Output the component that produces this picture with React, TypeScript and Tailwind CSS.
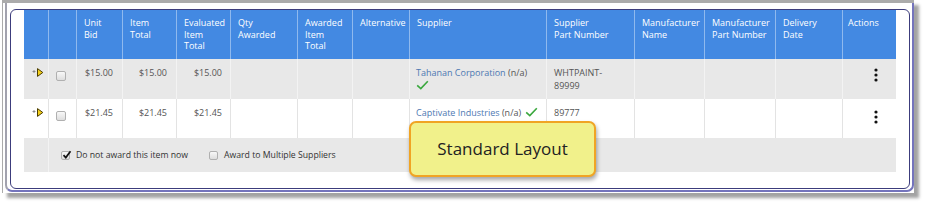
import React from 'react'

const grid =
  'grid grid-cols-[25px_28px_46px_54px_54px_67px_55px_57px_137px_88px_70px_71px_67px_54px]'

const headers = [
  '',
  '',
  'Unit\nBid',
  'Item\nTotal',
  'Evaluated\nItem\nTotal',
  'Qty\nAwarded',
  'Awarded\nItem\nTotal',
  'Alternative',
  'Supplier',
  'Supplier\nPart Number',
  'Manufacturer\nName',
  'Manufacturer\nPart Number',
  'Delivery\nDate',
  'Actions',
]

function Checkbox({ checked = false, size = 'w-[10px] h-[10px]' }: { checked?: boolean; size?: string }) {
  return (
    <div className={`relative ${size} rounded-[2px] border border-[#b0b0b0] bg-linear-to-b from-[#f8f8f8] to-[#dedede]`}>
      {checked && (
        <svg className="absolute -top-[2px] left-[0px]" width="10" height="10" viewBox="0 0 10 10">
          <path d="M1.5 5.2 L3.8 7.6 L8.5 1.2" fill="none" stroke="#111" strokeWidth="1.7" />
        </svg>
      )}
    </div>
  )
}

function Expand() {
  return (
    <svg width="12" height="9" viewBox="0 0 12 9">
      <path d="M0.5 3.5 H3.5 M2 2 V5" stroke="#888" strokeWidth="0.9" />
      <polygon points="5.5,0.6 10.8,4.5 5.5,8.4" fill="#f4cf1a" stroke="#4a3c00" strokeWidth="1" />
    </svg>
  )
}

function Check() {
  return (
    <svg width="13" height="10" viewBox="0 0 13 10">
      <path d="M1.2 5.4 L4.8 8.6 L11.8 1.2" fill="none" stroke="#3aa83e" strokeWidth="1.6" />
    </svg>
  )
}

function Dots() {
  return (
    <svg width="4" height="14" viewBox="0 0 4 14">
      <circle cx="2" cy="2" r="1.6" fill="#111" />
      <circle cx="2" cy="7" r="1.6" fill="#111" />
      <circle cx="2" cy="12" r="1.6" fill="#111" />
    </svg>
  )
}

type Row = {
  unit: string
  supplier: string
  part: string[]
  wrapCheck: boolean
  shade: boolean
}

const rows: Row[] = [
  { unit: '$15.00', supplier: 'Tahanan Corporation', part: ['WHTPAINT-', '89999'], wrapCheck: true, shade: true },
  { unit: '$21.45', supplier: 'Captivate Industries', part: ['89777'], wrapCheck: false, shade: false },
]

export default function App() {
  return (
    <div className="relative w-[928px] h-[205px] bg-white overflow-hidden font-['Open_Sans','Noto_Sans',sans-serif] text-[9px]">
      {/* screenshot frame */}
      <div className="ml-[2px] w-[912px] h-[193px] border-t-[3px] border-l border-[#ababab] shadow-[5px_5px_3px_#a3a3a3] pl-[2px]">
        <div className="w-[909px] h-[189px] pt-[6px] pl-[3px] pr-[2px] pb-[1px] border-l-2 border-r-2 border-b-2 border-l-[#a2a2ae] border-r-[#7474bc] border-b-[#7474bc] rounded-b-[7px]">
          <div className="h-full rounded-[6px] border border-[#3c3c7c] px-[13px]">
            {/* header */}
            <div className={`${grid} h-[49px] bg-[#4389e2] text-white`}>
              {headers.map((h, i) => (
                <div
                  key={i}
                  className={`px-[7px] pt-[7px] leading-[11.5px] whitespace-pre-line ${i < headers.length - 1 ? 'border-r border-[#8fb9ee]' : ''} ${i === headers.length - 1 ? 'pl-[5px]' : ''}`}
                >
                  {h}
                </div>
              ))}
            </div>

            {rows.map((r, idx) => {
              const bg = r.shade ? 'bg-[#e8e8e8]' : 'bg-white'
              const line = r.shade ? 'border-[#f3f3f3]' : 'border-[#e3e3e3]'
              return (
                <div key={idx} className={`${grid} ${bg} ${idx === 0 ? 'h-[40px]' : 'h-[39px]'} text-[#555] leading-[13px]`}>
                  <div className={`border-r ${line} pl-[8px] pt-[9px]`}>
                    <Expand />
                  </div>
                  <div className={`border-r ${line} pl-[7px] pt-[12px]`}>
                    <Checkbox />
                  </div>
                  <div className={`border-r ${line} pr-[9px] pt-[7px] text-right`}>{r.unit}</div>
                  <div className={`border-r ${line} pr-[9px] pt-[7px] text-right`}>{r.unit}</div>
                  <div className={`border-r ${line} pr-[8px] pt-[7px] text-right`}>{r.unit}</div>
                  <div className={`border-r ${line}`} />
                  <div className={`border-r ${line}`} />
                  <div className={`border-r ${line}`} />
                  <div className={`border-r ${line} pl-[6px] pt-[7px]`}>
                    <span className="text-[#4d78b2]">{r.supplier}</span> <span className="text-[#555]">(n/a)</span>
                    {r.wrapCheck ? (
                      <div className="pt-[1px]">
                        <Check />
                      </div>
                    ) : (
                      <span className="inline-block align-[-1px] ml-[4px]">
                        <Check />
                      </span>
                    )}
                  </div>
                  <div className={`border-r ${line} pl-[7px] pt-[7px]`}>
                    {r.part.map((p) => (
                      <div key={p}>{p}</div>
                    ))}
                  </div>
                  <div className={`border-r ${line}`} />
                  <div className={`border-r ${line}`} />
                  <div className={`border-r ${line}`} />
                  <div className={`flex justify-center pl-[11px] ${idx === 0 ? 'pt-[9px]' : 'pt-[11px]'}`}>
                    <Dots />
                  </div>
                </div>
              )
            })}

            {/* footer */}
            <div className="flex h-[34px] bg-[#e8e8e8] text-[#333] text-[8.7px]">
              <div className="w-[25px] border-r border-[#f3f3f3]" />
              <div className="flex items-center pl-[12px] pt-[1px]">
                <Checkbox checked size="w-[9px] h-[9px]" />
                <span className="ml-[6px]">Do not award this item now</span>
                <div className="ml-[21px]">
                  <Checkbox size="w-[9px] h-[9px]" />
                </div>
                <span className="ml-[6px]">Award to Multiple Suppliers</span>
              </div>
            </div>
          </div>
        </div>
      </div>

      {/* callout */}
      <div className="absolute left-[409px] top-[121px] w-[187px] h-[56px] rounded-[7px] border-[2.5px] border-[#f0a424] bg-[#f1f18b] shadow-[1px_3px_4px_rgba(0,0,0,0.35)] flex items-center justify-center text-[17px] text-[#222]">
        Standard Layout
      </div>
    </div>
  )
}
